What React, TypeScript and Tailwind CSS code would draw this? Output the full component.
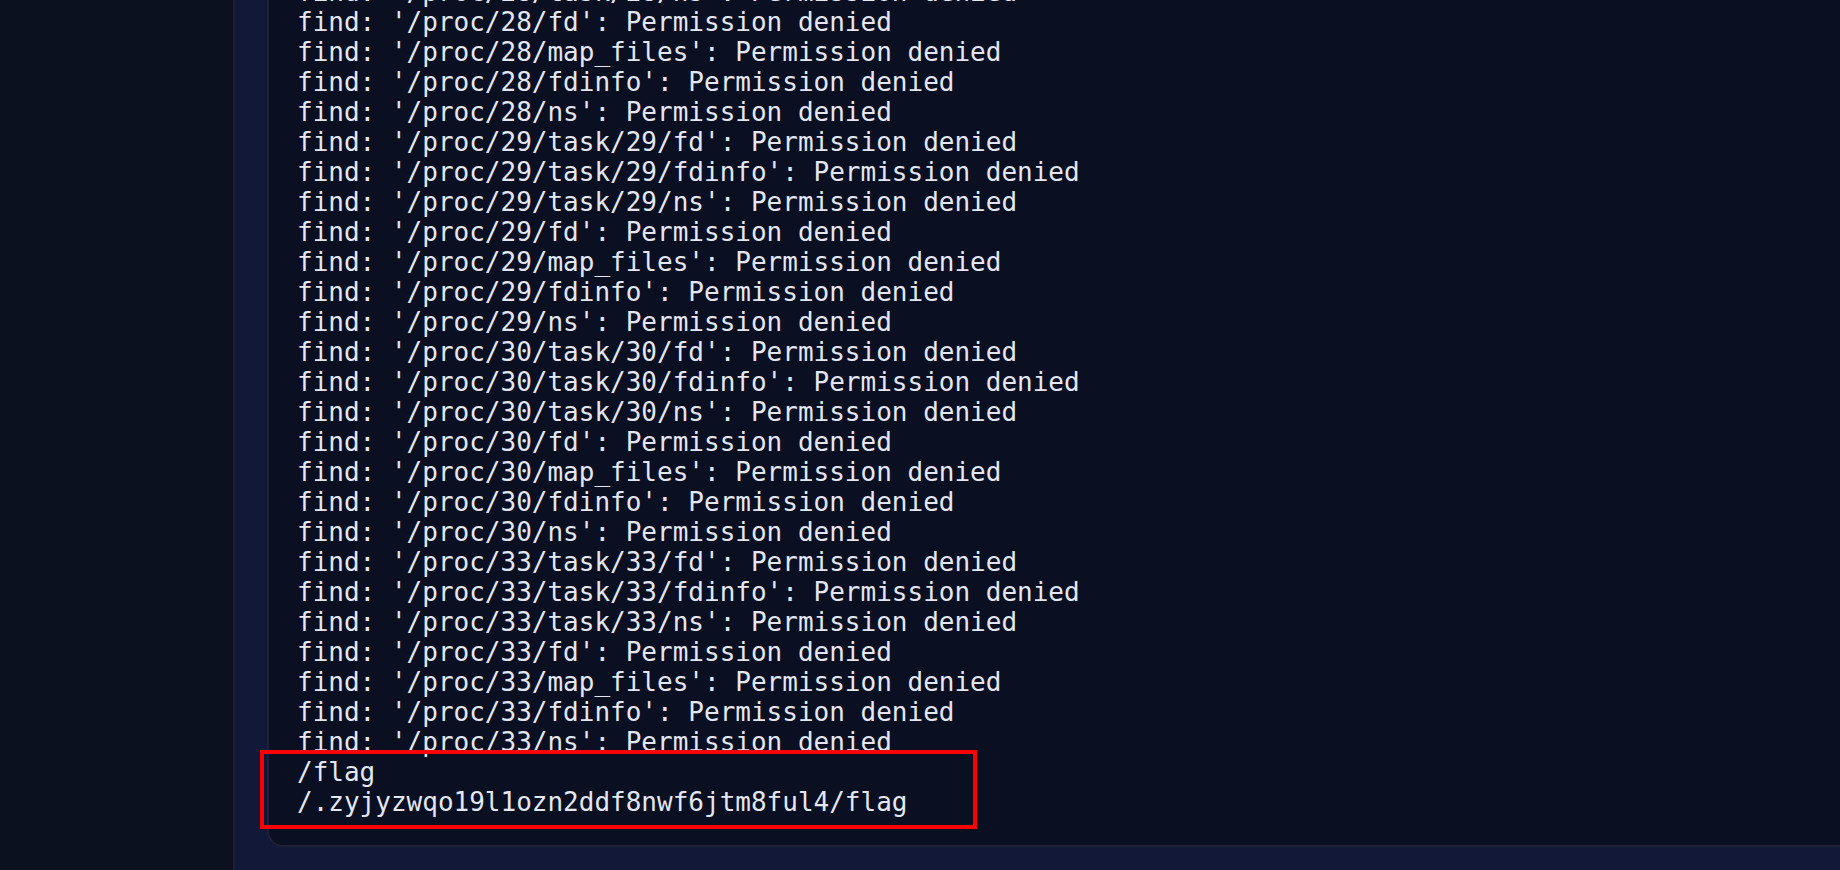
const lines = [
  "find: '/proc/28/task/28/ns': Permission denied",
  "find: '/proc/28/fd': Permission denied",
  "find: '/proc/28/map_files': Permission denied",
  "find: '/proc/28/fdinfo': Permission denied",
  "find: '/proc/28/ns': Permission denied",
  "find: '/proc/29/task/29/fd': Permission denied",
  "find: '/proc/29/task/29/fdinfo': Permission denied",
  "find: '/proc/29/task/29/ns': Permission denied",
  "find: '/proc/29/fd': Permission denied",
  "find: '/proc/29/map_files': Permission denied",
  "find: '/proc/29/fdinfo': Permission denied",
  "find: '/proc/29/ns': Permission denied",
  "find: '/proc/30/task/30/fd': Permission denied",
  "find: '/proc/30/task/30/fdinfo': Permission denied",
  "find: '/proc/30/task/30/ns': Permission denied",
  "find: '/proc/30/fd': Permission denied",
  "find: '/proc/30/map_files': Permission denied",
  "find: '/proc/30/fdinfo': Permission denied",
  "find: '/proc/30/ns': Permission denied",
  "find: '/proc/33/task/33/fd': Permission denied",
  "find: '/proc/33/task/33/fdinfo': Permission denied",
  "find: '/proc/33/task/33/ns': Permission denied",
  "find: '/proc/33/fd': Permission denied",
  "find: '/proc/33/map_files': Permission denied",
  "find: '/proc/33/fdinfo': Permission denied",
  "find: '/proc/33/ns': Permission denied",
];

const results = ["/flag", "/.zyjyzwqo19l1ozn2ddf8nwf6jtm8ful4/flag"];

export default function App() {
  return (
    <div className="flex h-screen w-full overflow-hidden bg-[#0c1120]">
      {/* Sidebar */}
      <aside className="w-[235px] shrink-0 border-r-2 border-[#1c1f33] bg-[#0c1120]" />

      {/* Main */}
      <main className="flex min-w-0 flex-1 flex-col justify-end bg-[#121838] pb-[23px] pl-[32px]">
        <div className="-mr-[20px] shrink-0 rounded-bl-[16px] border-2 border-r-0 border-t-0 border-[#1f2236] bg-[#0a0f22] pb-[28px] pl-[28px]">
          <pre className="font-['DejaVu_Sans_Mono',monospace] text-[26px] leading-[30px] text-[#e4e7f2]">
            {lines.map((line, i) => (
              <div key={i}>{line}</div>
            ))}
            <div className="relative">
              {results.map((r) => (
                <div key={r}>{r}</div>
              ))}
              {/* highlight box */}
              <span className="pointer-events-none absolute -left-[37px] -top-[7px] h-[79px] w-[717px] border-4 border-[#ff0000]" />
            </div>
          </pre>
        </div>
      </main>
    </div>
  );
}
